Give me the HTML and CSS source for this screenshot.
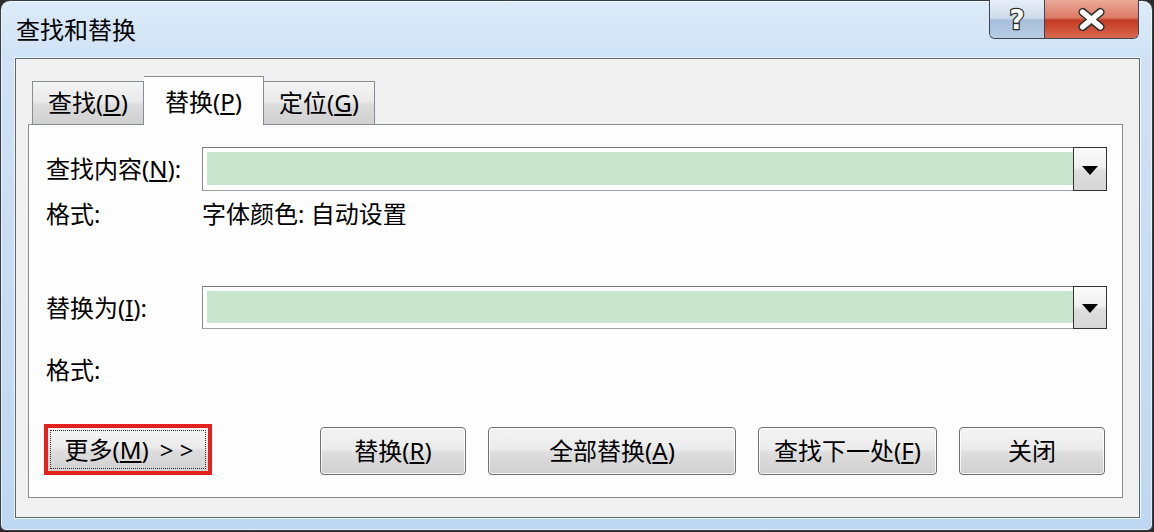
FILE: index.html
```html
<!DOCTYPE html>
<html lang="zh-CN">
<head>
  <meta charset="UTF-8" />
  <title>查找和替换</title>
  <link rel="stylesheet" href="styles.css">
</head>
<body>

<div class="window">
  <div class="titlebar">
    <div class="title">查找和替换</div>
    <div class="caption-buttons">
      <div class="cap-btn help">
        <svg width="56" height="38" viewBox="0 0 56 38">
          <text x="28" y="29" text-anchor="middle" class="cap-glyph">?</text>
        </svg>
      </div>
      <div class="cap-btn close">
        <svg width="94" height="38" viewBox="0 0 94 38">
          <g stroke="#2b2b2b" stroke-width="8.5" stroke-linecap="round">
            <line x1="38" y1="12" x2="56" y2="27" />
            <line x1="56" y1="12" x2="38" y2="27" />
          </g>
          <g stroke="#ffffff" stroke-width="5.5" stroke-linecap="round">
            <line x1="38" y1="12" x2="56" y2="27" />
            <line x1="56" y1="12" x2="38" y2="27" />
          </g>
        </svg>
      </div>
    </div>
  </div>

  <div class="client">
    <div class="tabs">
      <div class="tab">查找(<u>D</u>)</div>
      <div class="tab active">替换(<u>P</u>)</div>
      <div class="tab">定位(<u>G</u>)</div>
    </div>

    <div class="panel">
      <div class="row combo-row first">
        <div class="label">查找内容(<u>N</u>):</div>
        <div class="combo">
          <div class="combo-field"></div>
          <div class="combo-drop"><span class="arrow"></span></div>
        </div>
      </div>
      <div class="row fmt-row">
        <div class="label">格式:</div>
        <div class="value">字体颜色: 自动设置</div>
      </div>

      <div class="row combo-row second">
        <div class="label">替换为(<u>I</u>):</div>
        <div class="combo">
          <div class="combo-field"></div>
          <div class="combo-drop"><span class="arrow"></span></div>
        </div>
      </div>
      <div class="row fmt-row last">
        <div class="label">格式:</div>
        <div class="value"></div>
      </div>

      <div class="buttons">
        <div class="more-box">
          <div class="more-btn"><span class="focus">更多(<u>M</u>)<span class="chevrons">&gt; &gt;</span></span></div>
        </div>
        <div class="btn-group">
          <button class="btn w-replace">替换(<u>R</u>)</button>
          <button class="btn w-all">全部替换(<u>A</u>)</button>
          <button class="btn w-next">查找下一处(<u>F</u>)</button>
          <button class="btn w-close">关闭</button>
        </div>
      </div>
    </div>
  </div>
</div>

</body>
</html>
```

FILE: styles.css
```css
* { margin: 0; padding: 0; box-sizing: border-box; }
body {
  font-family: "Noto Sans", "Noto Sans CJK SC", sans-serif;
  font-size: 24px;
  background: #2a2a2a;
  color: #000;
  width: 1154px;
  height: 532px;
  overflow: hidden;
}

.window {
  width: 1153px;
  height: 531px;
  border: 1px solid #3a3f46;
  border-radius: 10px 10px 6px 6px;
  background: linear-gradient(to bottom, #dcebf9 0, #cfe2f5 58px, #bfd8f1 100%);
  box-shadow: inset 0 0 0 1px rgba(255, 255, 255, 0.55);
  padding: 0 12px 12px 14px;
  display: flex;
  flex-direction: column;
}

.titlebar {
  height: 57px;
  display: flex;
  align-items: flex-start;
  flex-shrink: 0;
}

.title {
  align-self: center;
  padding-left: 1px;
  margin-top: 1px;
  line-height: 1;
}

.caption-buttons {
  margin-left: auto;
  margin-top: -1px;
  margin-right: 1px;
  display: flex;
  border: 1px solid #3b4654;
  border-top: none;
  border-radius: 0 0 6px 6px;
  overflow: hidden;
}

.cap-btn {
  height: 38px;
  display: flex;
}

.cap-btn.help {
  width: 55px;
  background: linear-gradient(to bottom, #e6eef8 0, #cfdcec 48%, #a7bfdc 52%, #b8cce4 100%);
  border-right: 1px solid #3b4654;
}

.cap-btn.close {
  width: 93px;
  background: linear-gradient(to bottom, #eaa99a 0, #dc7b66 46%, #c43a22 54%, #d9694e 100%);
}

.cap-glyph {
  font-family: "DejaVu Sans", sans-serif;
  font-weight: bold;
  font-size: 27px;
  fill: #fff;
  stroke: #2b2b2b;
  stroke-width: 2.5px;
  paint-order: stroke;
}

.client {
  flex: 1;
  background: #f0f0f0;
  border: 1px solid #5c6570;
  box-shadow: 0 0 0 1px rgba(255, 255, 255, 0.7);
  padding: 17px 16px 19px 12px;
  display: flex;
  flex-direction: column;
}

.tabs {
  display: flex;
  align-items: flex-end;
  margin-left: 4px;
  position: relative;
  z-index: 2;
}

.tab {
  height: 43px;
  border: 1px solid #898c95;
  border-bottom: none;
  background: linear-gradient(to bottom, #f3f3f3 0, #ebebeb 45%, #dcdcdc 55%, #d0d0d0 100%);
  display: flex;
  align-items: center;
  justify-content: center;
  line-height: 1;
}

.tab:first-child { width: 112px; }
.tab:last-child { width: 111px; border-left: none; }

.tab.active {
  width: 120px;
  height: 49px;
  margin-bottom: -1px;
  background: #fdfdfd;
  border-left: none;
  padding-top: 2px;
}

.panel {
  flex: 1;
  background: #fdfdfd;
  border: 1px solid #898c95;
  padding: 22px 15px 0 17px;
  display: flex;
  flex-direction: column;
}

.row {
  display: flex;
  align-items: center;
}

.label {
  width: 156px;
  flex-shrink: 0;
  line-height: 1;
}

.value { line-height: 1; }

.combo-row { height: 44px; }
.combo-row.second { margin-top: 49px; height: 43px; }

.fmt-row { height: 46px; }
.fmt-row.last { height: 40px; margin-top: 21px; }

.combo {
  flex: 1;
  height: 100%;
  display: flex;
  border: 1px solid #a2a2a2;
  border-top-color: #7a7a7a;
  border-left-color: #8a8a8a;
  border-right: none;
  background: #fff;
}

.combo-field {
  flex: 1;
  margin: 4px 0 5px 4px;
  background: #c9e5cd;
}

.combo-drop {
  width: 34px;
  margin: -1px 0;
  border: 1px solid #333;
  background: linear-gradient(to bottom, #fbfbfb 0, #f0f0f0 45%, #dedede 55%, #d6d6d6 100%);
  display: flex;
  align-items: center;
  justify-content: center;
}

.arrow {
  width: 0;
  height: 0;
  border-left: 8px solid transparent;
  border-right: 8px solid transparent;
  border-top: 9px solid #000;
  margin-top: 2px;
}

.buttons {
  margin-top: 34px;
  margin-left: -2px;
  margin-right: 2px;
  display: flex;
  align-items: flex-end;
}

.more-box {
  width: 168px;
  height: 51px;
  border: 4px solid #e4221d;
  background: #e4221d;
}

.more-btn {
  height: 100%;
  background: linear-gradient(to bottom, #f4f4f4 0, #ebebeb 45%, #dcdcdc 55%, #d2d2d2 100%);
  padding: 2px;
  display: flex;
}

.focus {
  flex: 1;
  border: 1px dotted #333;
  display: flex;
  align-items: center;
  justify-content: center;
  line-height: 1;
  padding-left: 2px;
}

.chevrons {
  margin-left: 11px;
}

.btn-group {
  margin-left: auto;
  display: flex;
  gap: 22px;
}

.btn {
  height: 48px;
  font-family: inherit;
  font-size: 24px;
  color: #000;
  border: 1px solid #707070;
  border-radius: 4px;
  background: linear-gradient(to bottom, #f3f3f3 0, #ececec 45%, #dddddd 55%, #d0d0d0 100%);
  box-shadow: inset 0 0 0 1px rgba(255, 255, 255, 0.8);
  line-height: 1;
}

.w-replace { width: 146px; }
.w-all { width: 248px; }
.w-next { width: 179px; }
.w-close { width: 146px; }
```
